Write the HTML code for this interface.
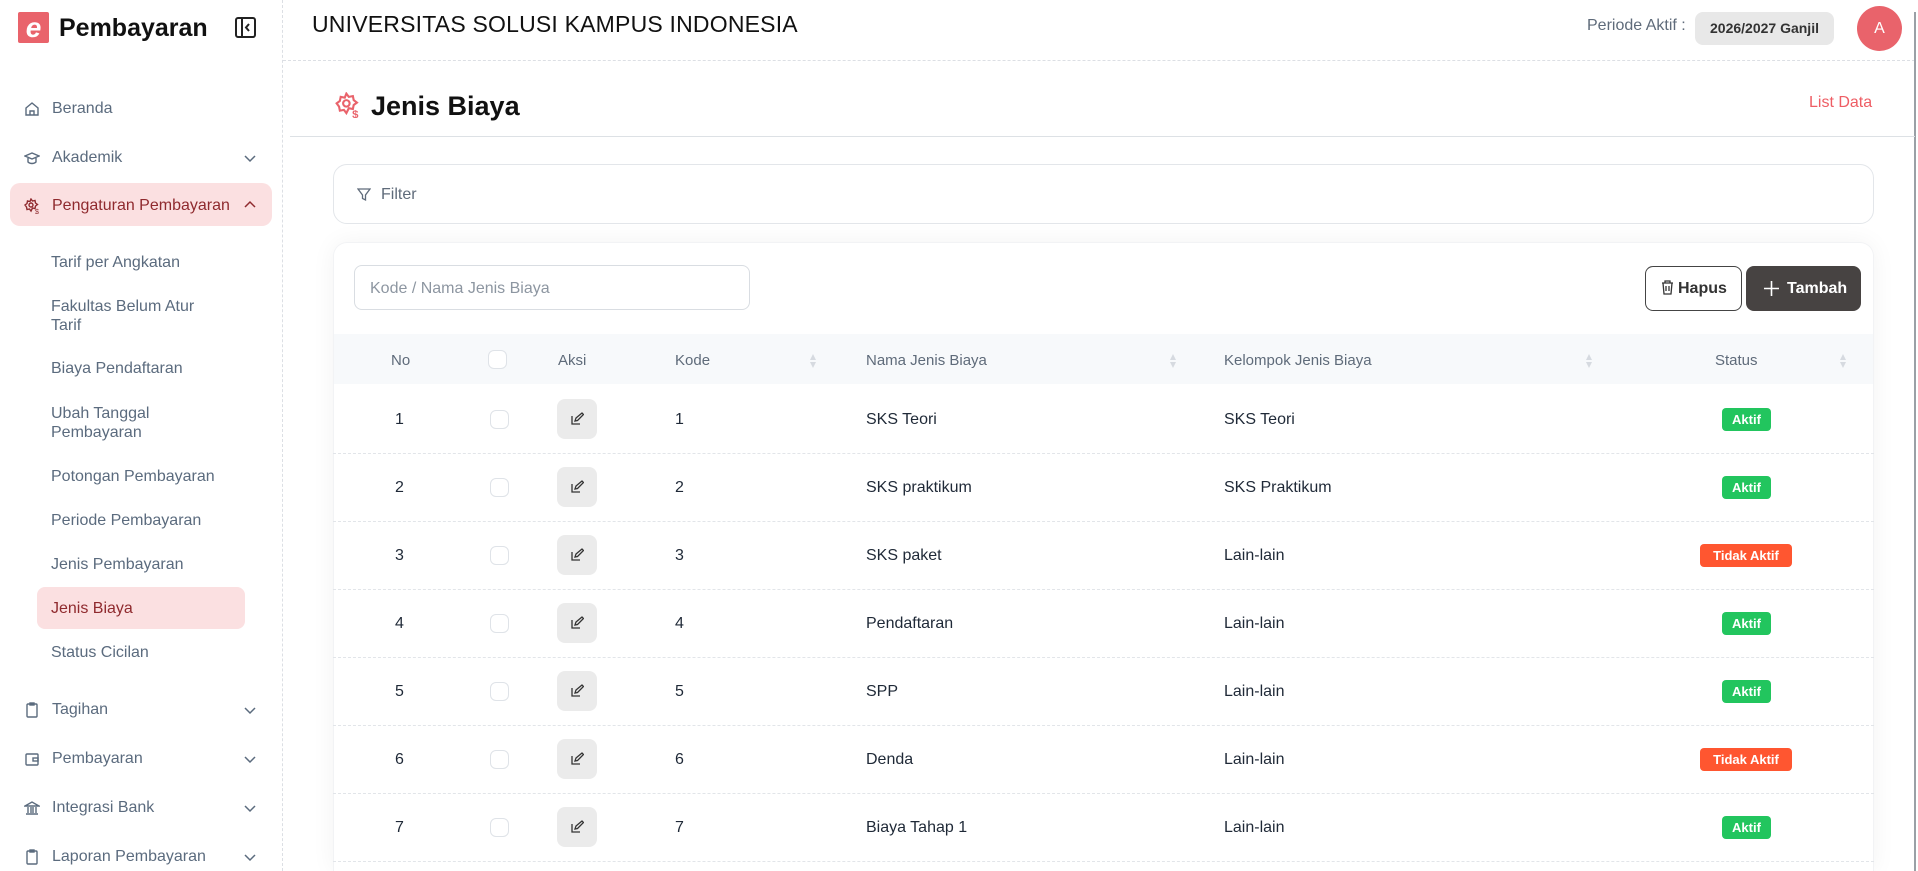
<!DOCTYPE html>
<html><head><meta charset="utf-8"><style>
*{box-sizing:border-box;margin:0;padding:0}
html,body{width:1918px;height:871px;overflow:hidden}
body{background:#fff;font-family:"Liberation Sans",sans-serif;position:relative;color:#1f2937}
.a{position:absolute}
.side{left:0;top:0;width:283px;height:871px;border-right:1px dashed #dcdfe4}
.nav{position:absolute;left:0;width:283px;font-size:16px;color:#5b6b7e;line-height:20px}
.nav .ic{position:absolute;left:24px;top:2px}
.nav .t{position:absolute;left:52px;top:0;white-space:nowrap}
.nav .chev{position:absolute;left:244px;top:6px}
.sub{position:absolute;left:51px;font-size:16px;color:#5b6b7e;line-height:20px}
.th{position:absolute;font-size:15px;color:#5f6b7a;top:352px}
.cell{position:absolute;font-size:16px;color:#1f2937}
.cb{position:absolute;width:19px;height:19px;border:1px solid #dfe3e8;border-radius:6px;background:#fff}
.eb{position:absolute;width:40px;height:40px;border-radius:8px;background:#ebebeb}
.badge{position:absolute;height:23px;border-radius:4px;color:#fff;font-weight:bold;font-size:13px;line-height:23px;text-align:center}
.g{background:#22c55e;width:49px;left:1722px}
.r{background:#ff5630;width:92px;left:1700px}
.sep{position:absolute;left:333px;width:1541px;border-top:1px dashed #e2e5e9}
.sort{position:absolute;width:8px;height:16px}
</style></head><body>
<div class="a side"></div>
<div class="a" style="left:18px;top:12px;width:31px;height:31px;background:#e9636b;border-radius:2px;color:#fff;font-weight:bold;font-size:28px;line-height:31px;text-align:center;font-style:italic">e</div>
<div class="a" style="left:59px;top:14px;font-size:25px;font-weight:bold;color:#111">Pembayaran</div>
<svg class="a" style="left:235px;top:17px" width="21" height="21" viewBox="0 0 21 21"><rect x="1" y="1" width="19" height="19" rx="2" fill="none" stroke="#222" stroke-width="2"/><line x1="7" y1="1" x2="7" y2="20" stroke="#222" stroke-width="2"/><path d="M14 7l-3 3.5 3 3.5" fill="none" stroke="#222" stroke-width="2"/></svg>

<div class="nav" style="top:99px"><svg class="ic" width="16" height="16" viewBox="0 0 16 16" fill="none" stroke="#5b6b7e" stroke-width="1.4"><path d="M2 7l6-5 6 5v7H2z M6 14v-4h4v4"/></svg><span class="t">Beranda</span></div>
<div class="nav" style="top:148px"><svg class="ic" width="16" height="16" viewBox="0 0 16 16" fill="none" stroke="#5b6b7e" stroke-width="1.4"><path d="M1 6l7-3 7 3-7 3z M4 8v4c2 2 6 2 8 0V8"/></svg><span class="t">Akademik</span><svg class="chev" width="12" height="10"><path d="M1 2l5 5 5-5" fill="none" stroke="#5b6b7e" stroke-width="1.5"/></svg></div>
<div class="a" style="left:10px;top:183px;width:262px;height:43px;background:#fbe0e1;border-radius:10px"></div>
<div class="nav" style="top:196px;color:#8f2a2e"><svg class="ic" width="16" height="16" viewBox="0 0 16 16" fill="none" stroke="#8f2a2e" stroke-width="1.4"><circle cx="7" cy="7" r="2"/><path d="M7 1l1.5 2 2.5-.5.5 2.5 2 1.5-2 1.5-.5 2.5-2.5-.5L7 13l-1.5-2-2.5.5-.5-2.5L1 7l2-1.5.5-2.5 2.5.5z"/><text x="11" y="16" font-size="7" fill="#8f2a2e" stroke="none">$</text></svg><span class="t">Pengaturan Pembayaran</span><svg class="chev" style="top:4px" width="12" height="10"><path d="M1 7l5-5 5 5" fill="none" stroke="#8f2a2e" stroke-width="1.5"/></svg></div>
<div class="sub" style="top:253px">Tarif per Angkatan</div>
<div class="sub" style="top:297px;line-height:19px">Fakultas Belum Atur<br>Tarif</div>
<div class="sub" style="top:359px">Biaya Pendaftaran</div>
<div class="sub" style="top:404px;line-height:19px">Ubah Tanggal<br>Pembayaran</div>
<div class="sub" style="top:467px">Potongan Pembayaran</div>
<div class="sub" style="top:511px">Periode Pembayaran</div>
<div class="sub" style="top:555px">Jenis Pembayaran</div>
<div class="a" style="left:37px;top:587px;width:208px;height:42px;background:#fbe0e1;border-radius:8px"></div>
<div class="sub" style="top:599px;color:#8f2a2e">Jenis Biaya</div>
<div class="sub" style="top:643px">Status Cicilan</div>
<div class="nav" style="top:700px"><svg class="ic" width="16" height="16" viewBox="0 0 16 16" fill="none" stroke="#5b6b7e" stroke-width="1.4"><rect x="3" y="2" width="10" height="13" rx="1"/><rect x="6" y="1" width="4" height="2"/></svg><span class="t">Tagihan</span><svg class="chev" width="12" height="10"><path d="M1 2l5 5 5-5" fill="none" stroke="#5b6b7e" stroke-width="1.5"/></svg></div>
<div class="nav" style="top:749px"><svg class="ic" width="16" height="16" viewBox="0 0 16 16" fill="none" stroke="#5b6b7e" stroke-width="1.4"><rect x="2" y="3" width="12" height="11" rx="1"/><rect x="9" y="7" width="5" height="3"/></svg><span class="t">Pembayaran</span><svg class="chev" width="12" height="10"><path d="M1 2l5 5 5-5" fill="none" stroke="#5b6b7e" stroke-width="1.5"/></svg></div>
<div class="nav" style="top:798px"><svg class="ic" width="16" height="16" viewBox="0 0 16 16" fill="none" stroke="#5b6b7e" stroke-width="1.4"><path d="M1 6l7-4 7 4z M2 14h12 M4 7v6 M7 7v6 M9 7v6 M12 7v6"/></svg><span class="t">Integrasi Bank</span><svg class="chev" width="12" height="10"><path d="M1 2l5 5 5-5" fill="none" stroke="#5b6b7e" stroke-width="1.5"/></svg></div>
<div class="nav" style="top:847px"><svg class="ic" width="16" height="16" viewBox="0 0 16 16" fill="none" stroke="#5b6b7e" stroke-width="1.4"><rect x="3" y="2" width="10" height="13" rx="1"/><rect x="6" y="1" width="4" height="2"/></svg><span class="t">Laporan Pembayaran</span><svg class="chev" width="12" height="10"><path d="M1 2l5 5 5-5" fill="none" stroke="#5b6b7e" stroke-width="1.5"/></svg></div>

<div class="a" style="left:283px;top:60px;width:1632px;border-top:1px dashed #dcdfe4"></div>
<div class="a" style="left:312px;top:11px;font-size:23px;color:#111;letter-spacing:.2px">UNIVERSITAS SOLUSI KAMPUS INDONESIA</div>
<div class="a" style="left:1587px;top:17px;font-size:16px;color:#5f6b7a">Periode Aktif :</div>
<div class="a" style="left:1695px;top:12px;width:139px;height:33px;background:#e8e8e8;border-radius:8px;font-size:14px;font-weight:bold;line-height:33px;text-align:center;color:#333">2026/2027 Ganjil</div>
<div class="a" style="left:1857px;top:6px;width:45px;height:45px;border-radius:50%;background:#e9636b;color:#fff;font-size:16px;line-height:45px;text-align:center">A</div>
<div class="a" style="left:1914px;top:12px;width:2px;height:859px;background:#9aa0a6"></div>

<svg class="a" style="left:335px;top:92px" width="26" height="26" viewBox="0 0 16 16" fill="none" stroke="#e9636b" stroke-width="1.3"><circle cx="7" cy="7" r="2"/><path d="M7 1l1.5 2 2.5-.5.5 2.5 2 1.5-2 1.5-.5 2.5-2.5-.5L7 13l-1.5-2-2.5.5-.5-2.5L1 7l2-1.5.5-2.5 2.5.5z"/><text x="10.5" y="16" font-size="7" fill="#e9636b" stroke="none" font-weight="bold">$</text></svg>
<div class="a" style="left:371px;top:91px;font-size:27px;font-weight:bold;color:#111">Jenis Biaya</div>
<div class="a" style="left:1809px;top:94px;font-size:16px;color:#ee5d64">List Data</div>
<div class="a" style="left:290px;top:136px;width:1625px;border-top:1px solid #dde1e5"></div>

<div class="a" style="left:333px;top:164px;width:1541px;height:60px;border:1px solid #e3e6ea;border-radius:14px"></div>
<svg class="a" style="left:357px;top:188px" width="14" height="14" viewBox="0 0 14 14"><path d="M1 1h12l-4.5 6v5l-3-1.5V7z" fill="none" stroke="#5f6b7a" stroke-width="1.3"/></svg>
<div class="a" style="left:381px;top:186px;font-size:16px;color:#5f6b7a">Filter</div>

<div class="a" style="left:333px;top:242px;width:1541px;height:629px;border-radius:14px 14px 0 0;box-shadow:0 0 24px rgba(0,0,0,.05);border:1px solid #f2f3f5;border-bottom:none"></div>
<div class="a" style="left:354px;top:265px;width:396px;height:45px;border:1px solid #d9dde2;border-radius:8px;font-size:16px;color:#8d96a1;line-height:45px;padding-left:15px">Kode / Nama Jenis Biaya</div>
<div class="a" style="left:1645px;top:266px;width:97px;height:45px;border:1px solid #444;border-radius:8px;font-size:16px;font-weight:bold;line-height:44px;padding-left:32px;color:#333">Hapus</div>
<svg class="a" style="left:1661px;top:280px" width="13" height="15" viewBox="0 0 13 15" fill="none" stroke="#333" stroke-width="1.3"><path d="M1 3h11 M4 3V1h5v2 M2 3l1 11h7l1-11 M5 6v5 M8 6v5"/></svg>
<div class="a" style="left:1746px;top:266px;width:115px;height:45px;background:#474342;border-radius:8px;font-size:16px;font-weight:bold;line-height:45px;color:#fff;padding-left:41px">Tambah</div>
<svg class="a" style="left:1763px;top:280px" width="17" height="17"><path d="M8.5 1v15M1 8.5h15" stroke="#fff" stroke-width="1.6"/></svg>

<div class="a" style="left:334px;top:334px;width:1539px;height:50px;background:#f7f9fb"></div>
<div class="th" style="left:391px">No</div>
<div class="cb" style="left:488px;top:350px"></div>
<div class="th" style="left:558px">Aksi</div>
<div class="th" style="left:675px">Kode</div>
<div class="th" style="left:866px">Nama Jenis Biaya</div>
<div class="th" style="left:1224px">Kelompok Jenis Biaya</div>
<div class="th" style="left:1715px">Status</div>
<svg class="sort" style="left:809px;top:353px" viewBox="0 0 8 16"><path d="M4 1l3 6H1z M4 15l3-6H1z" fill="#d6dae0"/></svg>
<svg class="sort" style="left:1169px;top:353px" viewBox="0 0 8 16"><path d="M4 1l3 6H1z M4 15l3-6H1z" fill="#d6dae0"/></svg>
<svg class="sort" style="left:1585px;top:353px" viewBox="0 0 8 16"><path d="M4 1l3 6H1z M4 15l3-6H1z" fill="#d6dae0"/></svg>
<svg class="sort" style="left:1839px;top:353px" viewBox="0 0 8 16"><path d="M4 1l3 6H1z M4 15l3-6H1z" fill="#d6dae0"/></svg>

<div id="rows"></div>
<script>
var d=[["SKS Teori","SKS Teori",1],["SKS praktikum","SKS Praktikum",1],["SKS paket","Lain-lain",0],["Pendaftaran","Lain-lain",1],["SPP","Lain-lain",1],["Denda","Lain-lain",0],["Biaya Tahap 1","Lain-lain",1]];
var h="";
for(var i=0;i<d.length;i++){var c=419+i*68;
h+='<div class="cell" style="left:395px;top:'+(c-8)+'px">'+(i+1)+'</div>';
h+='<div class="cb" style="left:490px;top:'+(c-9)+'px"></div>';
h+='<div class="eb" style="left:557px;top:'+(c-20)+'px"></div>';
h+='<svg class="a" style="left:571px;top:'+(c-7)+'px" width="13" height="13" viewBox="0 0 13 13" fill="none" stroke="#333" stroke-width="1.3"><path d="M1 4v8h8 M4 9l1-3 6-5 1.5 1.5-6 6z"/></svg>';
h+='<div class="cell" style="left:675px;top:'+(c-8)+'px">'+(i+1)+'</div>';
h+='<div class="cell" style="left:866px;top:'+(c-8)+'px">'+d[i][0]+'</div>';
h+='<div class="cell" style="left:1224px;top:'+(c-8)+'px">'+d[i][1]+'</div>';
h+=d[i][2]?'<div class="badge g" style="top:'+(c-11)+'px">Aktif</div>':'<div class="badge r" style="top:'+(c-11)+'px">Tidak Aktif</div>';
h+='<div class="sep" style="top:'+(c+34)+'px"></div>';}
document.getElementById("rows").innerHTML=h;
</script>
</body></html>
